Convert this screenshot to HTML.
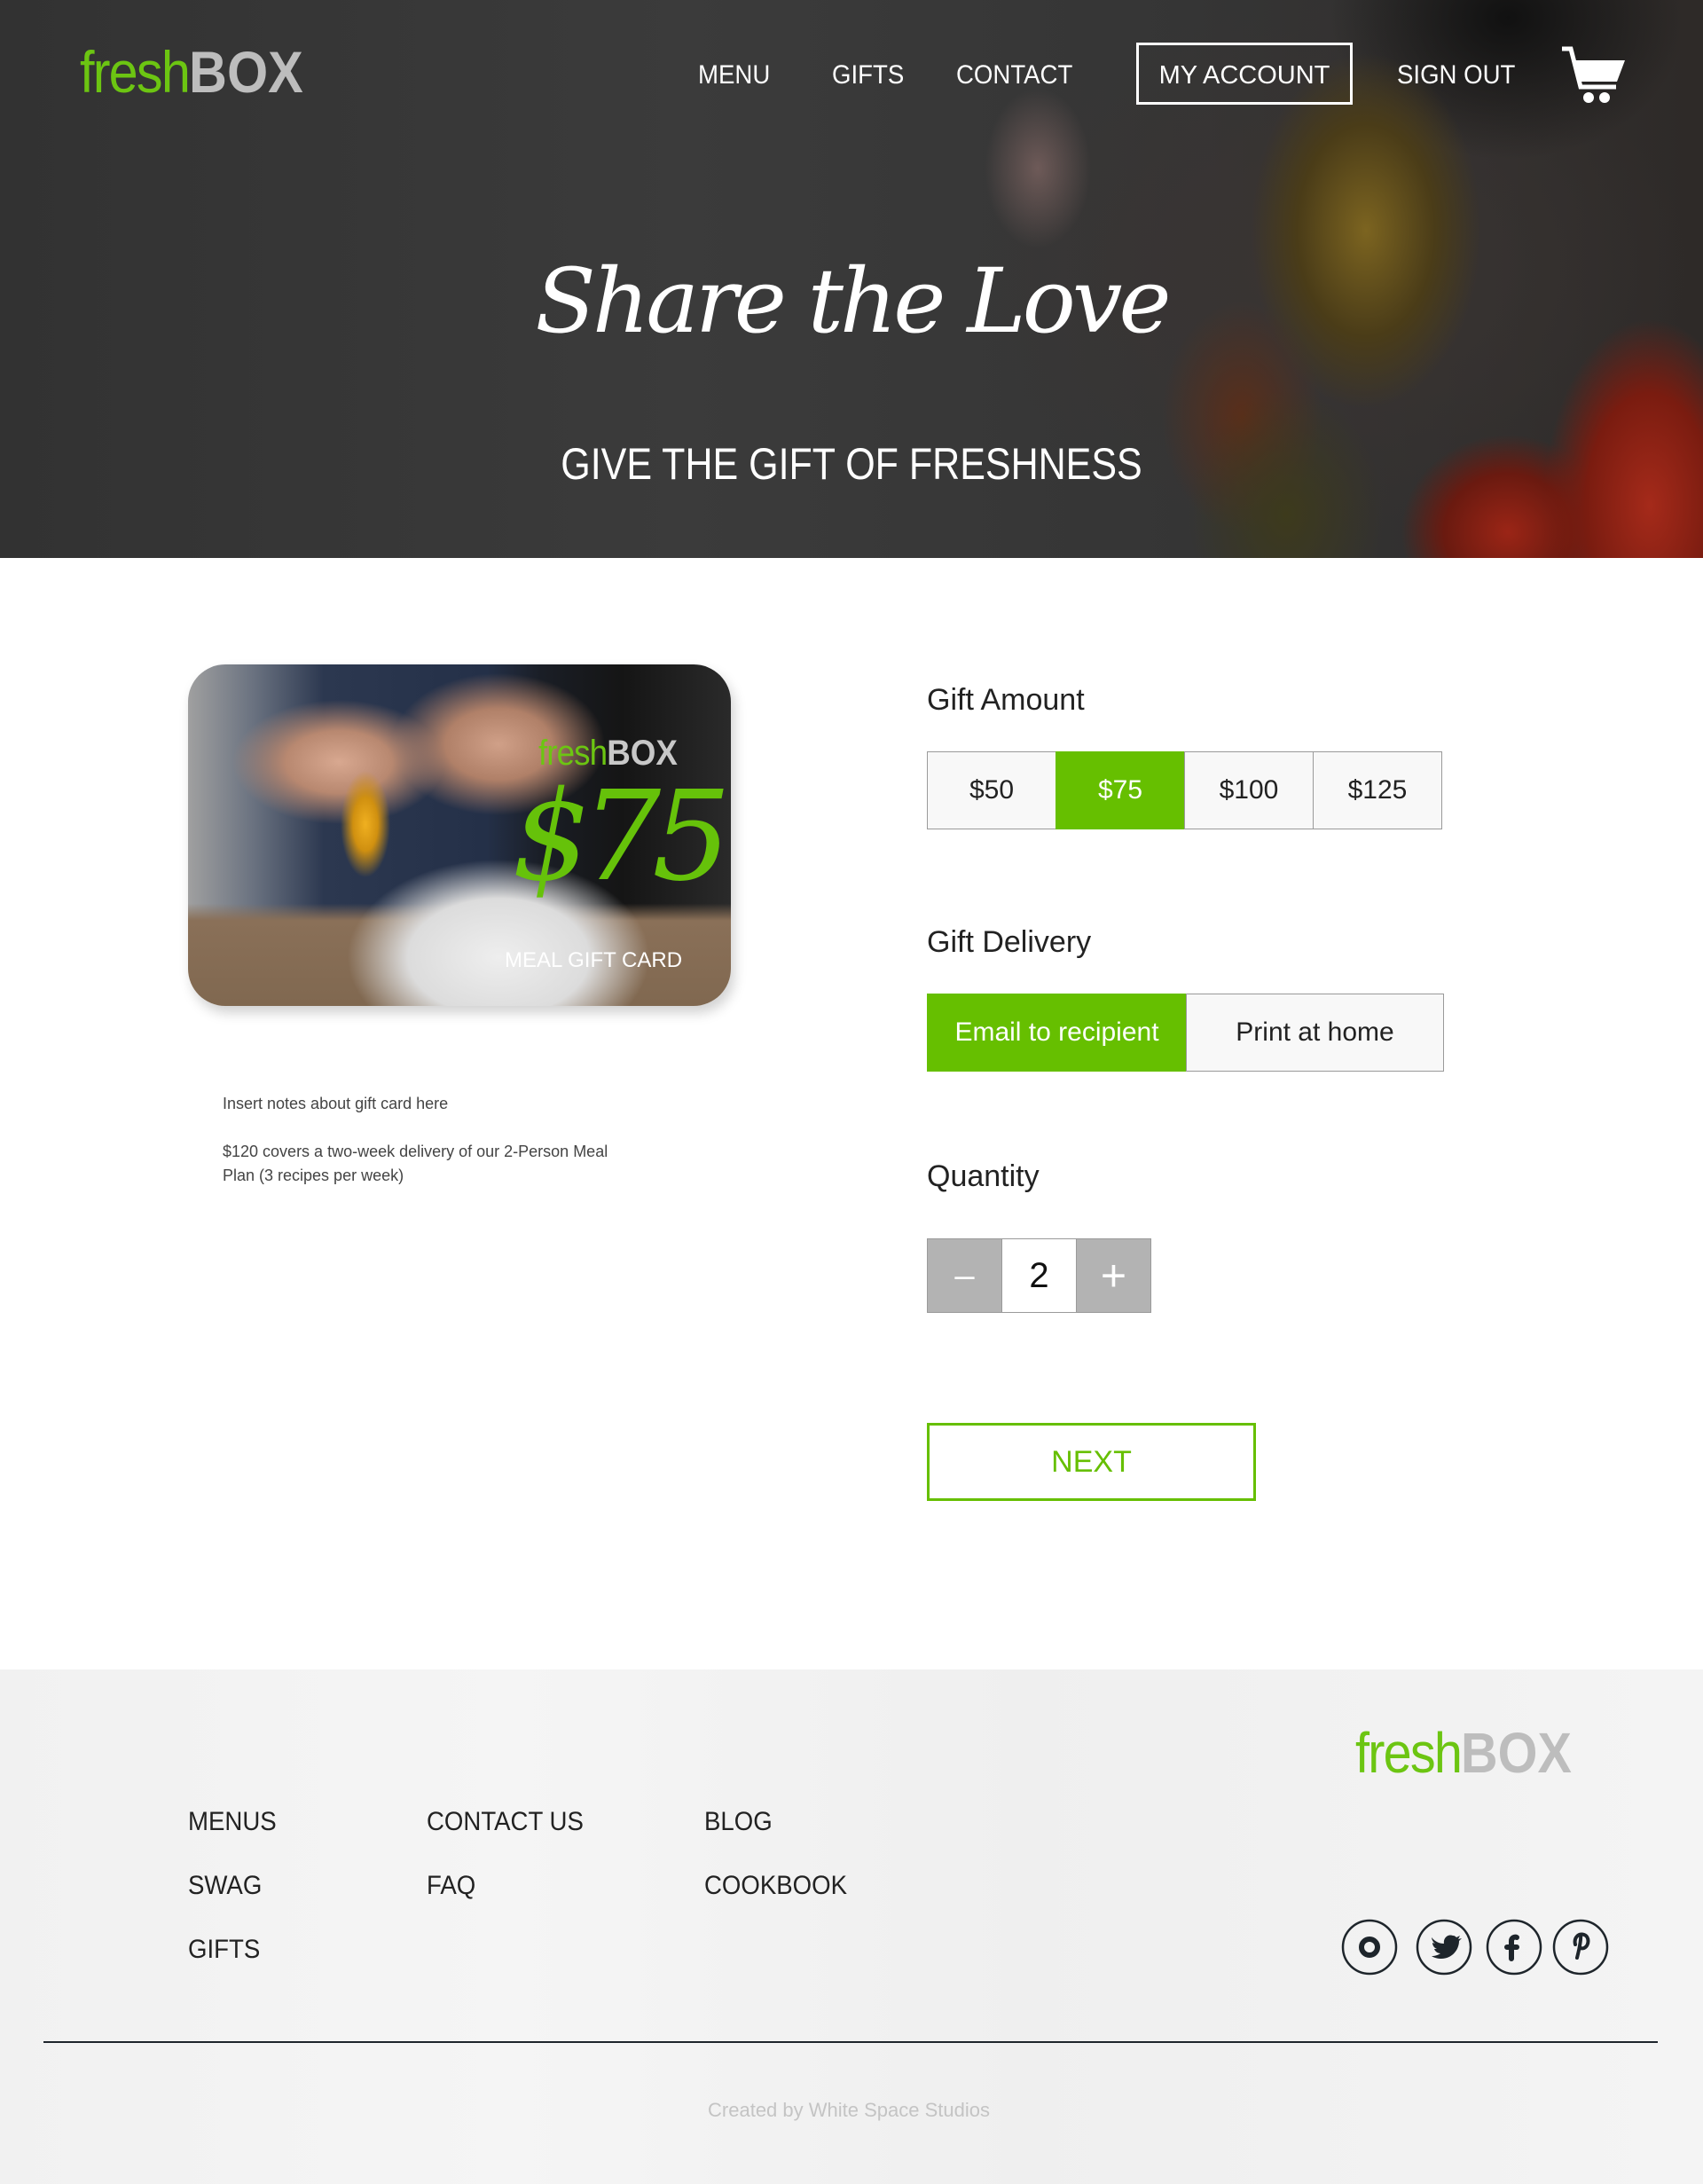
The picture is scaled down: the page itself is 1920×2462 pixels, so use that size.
<!DOCTYPE html>
<html><head><meta charset="utf-8">
<style>
*{margin:0;padding:0;box-sizing:border-box}
body{width:1920px;height:2462px;background:#fff;font-family:"Liberation Sans",sans-serif;position:relative;overflow:hidden}
.abs{position:absolute}
#hero{left:0;top:0;width:1920px;height:629px;overflow:hidden;
background:
radial-gradient(ellipse 120px 210px at 1860px 570px,#a52a1a 0,#7a1c10 60%,transparent 100%),
radial-gradient(ellipse 120px 110px at 1700px 600px,#9b2516 0,#6a1a10 60%,transparent 100%),
radial-gradient(ellipse 110px 140px at 1450px 580px,#3d3a1c 0,transparent 100%),
radial-gradient(ellipse 90px 130px at 1400px 470px,#5a2e1a 0,transparent 100%),
radial-gradient(ellipse 130px 200px at 1540px 260px,#7c6420 0,#4a3c18 60%,transparent 100%),
radial-gradient(ellipse 60px 90px at 1170px 190px,#6e5a58 0,transparent 100%),
radial-gradient(ellipse 200px 160px at 1700px 20px,#111 0,transparent 100%),
radial-gradient(ellipse 400px 300px at 1500px 300px,#3a3432 0,transparent 100%),
linear-gradient(90deg,#323232,#3b3b3b 40%,#353535 70%,#2e2a28)}
.nav{color:#fff;font-size:30px;top:68px;transform:scaleX(.92);transform-origin:left}
.footer{left:0;top:1882px;width:1920px;height:580px;background:linear-gradient(90deg,#f1f1f1,#f5f5f5 30%,#efefef 60%,#f4f4f4);}
.fl{font-size:30px;color:#222;transform:scaleX(.92);transform-origin:left}
.btn{position:absolute;border:1.5px solid #9a9a9a;background:#f8f8f8;color:#222;font-size:30px;display:flex;align-items:center;justify-content:center}
.on{background:#66bf00;color:#fff}
.lbl{font-size:34px;color:#222;left:1045px}
.logo{line-height:1;white-space:nowrap;transform-origin:left top}
</style></head><body>
<div id="hero" class="abs">
  <div class="abs logo" style="left:90px;top:48px;font-size:66px;transform:scaleX(.9)">
    <span style="color:#6cc512;letter-spacing:-2px">fresh</span><span style="color:#bdbdbd;font-weight:bold">BOX</span>
  </div>
  <div class="abs nav" style="left:787px">MENU</div>
  <div class="abs nav" style="left:938px">GIFTS</div>
  <div class="abs nav" style="left:1078px">CONTACT</div>
  <div class="abs" style="left:1281px;top:48px;width:244px;height:70px;border:3px solid #fff;color:#fff;font-size:29px;display:flex;align-items:center;justify-content:center;padding-top:4px">MY ACCOUNT</div>
  <div class="abs nav" style="left:1575px">SIGN OUT</div>
  <svg class="abs" style="left:0;top:0" width="1920" height="629">
    <polyline points="1761,55 1771,55 1782,98 1822,98" fill="none" stroke="#fff" stroke-width="5"/>
    <polygon points="1774,68 1832,68 1823,92 1780,92" fill="#fff"/>
    <circle cx="1791" cy="110" r="6" fill="#fff"/><circle cx="1809" cy="110" r="6" fill="#fff"/>
  </svg>
  <div class="abs" style="left:460px;top:280px;width:1000px;text-align:center;white-space:nowrap;color:#fff;font-family:'DejaVu Serif',serif;font-style:italic;font-weight:200;font-size:100px;letter-spacing:-4px;line-height:1.2">Share the Love</div>
  <div class="abs" style="left:460px;top:494px;width:1000px;text-align:center;white-space:nowrap;color:#fff;font-size:50px;transform:scaleX(.86)">GIVE THE GIFT OF FRESHNESS</div>
</div>

<div class="abs" style="left:212px;top:749px;width:612px;height:385px;border-radius:42px;overflow:hidden;box-shadow:4px 8px 14px rgba(0,0,0,.18);
background:
radial-gradient(ellipse 170px 110px at 350px 330px,#eeeeee 0,#dcdcdc 60%,transparent 100%),
radial-gradient(ellipse 28px 60px at 200px 180px,#f0b020 0,#d09010 50%,transparent 100%),
radial-gradient(ellipse 120px 70px at 170px 110px,#d8a890 0,#b88870 50%,transparent 100%),
radial-gradient(ellipse 120px 80px at 350px 90px,#d0a088 0,#b08068 50%,transparent 100%),
linear-gradient(180deg,transparent 70%,#8a7058 75%,#806850 100%),
linear-gradient(90deg,#a0a0a0 0,#6a7280 12%,#2c3850 25%,#243048 55%,#1a1e26 65%,#151515 80%,#2a2a2a 100%)">
  <div class="abs logo" style="left:395px;top:80px;font-size:40px;transform:scaleX(.92)"><span style="color:#6cc512;letter-spacing:-1px">fresh</span><span style="color:#c8c8c8;font-weight:bold">BOX</span></div>
  <div class="abs" style="left:365px;top:125px;font-size:140px;color:#66c20a;font-family:'DejaVu Serif',serif;font-style:italic;font-weight:200;letter-spacing:-10px;line-height:1">$75</div>
  <div class="abs" style="left:357px;top:320px;font-size:24px;color:#fff">MEAL GIFT CARD</div>
</div>
<div class="abs" style="left:251px;top:1231px;font-size:18px;color:#444;line-height:27px">Insert notes about gift card here<br><br style="line-height:18px">$120 covers a two-week delivery of our 2-Person Meal<br>Plan (3 recipes per week)</div>

<div class="abs lbl" style="top:770px">Gift Amount</div>
<div class="btn" style="left:1045px;top:847px;width:146px;height:88px">$50</div>
<div class="btn on" style="left:1190px;top:847px;width:146px;height:88px;border-color:#66bf00">$75</div>
<div class="btn" style="left:1335px;top:847px;width:146px;height:88px">$100</div>
<div class="btn" style="left:1480px;top:847px;width:146px;height:88px">$125</div>

<div class="abs lbl" style="top:1043px">Gift Delivery</div>
<div class="btn on" style="left:1045px;top:1120px;width:293px;height:88px;border-color:#66bf00">Email to recipient</div>
<div class="btn" style="left:1337px;top:1120px;width:291px;height:88px">Print at home</div>

<div class="abs lbl" style="top:1307px">Quantity</div>
<div class="btn" style="left:1045px;top:1396px;width:85px;height:84px;background:#b3b3b3;color:#fff;font-size:40px">–</div>
<div class="btn" style="left:1129px;top:1396px;width:85px;height:84px;background:#fff;color:#111;font-size:40px">2</div>
<div class="btn" style="left:1213px;top:1396px;width:85px;height:84px;background:#b3b3b3;color:#fff;font-size:50px">+</div>

<div class="abs" style="left:1045px;top:1604px;width:371px;height:88px;border:3px solid #66bf00;color:#66bf00;font-size:34px;display:flex;align-items:center;justify-content:center">NEXT</div>

<div class="abs footer">
  <div class="abs logo" style="left:1528px;top:62px;font-size:64px;transform:scaleX(.9)"><span style="color:#6cc512;letter-spacing:-2px">fresh</span><span style="color:#bdbdbd;font-weight:bold">BOX</span></div>
  <div class="abs fl" style="left:212px;top:155px">MENUS</div>
  <div class="abs fl" style="left:212px;top:227px">SWAG</div>
  <div class="abs fl" style="left:212px;top:299px">GIFTS</div>
  <div class="abs fl" style="left:481px;top:155px">CONTACT US</div>
  <div class="abs fl" style="left:481px;top:227px">FAQ</div>
  <div class="abs fl" style="left:794px;top:155px">BLOG</div>
  <div class="abs fl" style="left:794px;top:227px">COOKBOOK</div>
  <svg class="abs" style="left:0;top:0" width="1920" height="580">
    <g fill="none" stroke="#1e252b" stroke-width="2.5">
      <circle cx="1544" cy="313" r="30"/><circle cx="1628" cy="313" r="30"/><circle cx="1707" cy="313" r="30"/><circle cx="1782" cy="313" r="30"/>
      <circle cx="1544" cy="313" r="9" stroke-width="6"/>
    </g>
    <path fill="#1e252b" d="M1614 302c4 5 9 7 14 7-1-7 5-11 10-9 2 0 3 1 4 2l4-2-2 4 4-1-3 3c0 10-8 20-20 20-4 0-8-1-11-3 4 0 7-1 10-3-3 0-6-2-7-5h3c-3-1-5-4-5-7l3 1c-3-2-4-6-4-7z"/>
    <path fill="none" stroke="#1e252b" stroke-width="6" stroke-linecap="round" d="M1710 302c-2-1-6 0-6 4v20M1699 313h11"/>
    <path fill="none" stroke="#1e252b" stroke-width="4" stroke-linecap="round" d="M1778 325c2-8 5-20 4-26M1776 310c-2-8 4-13 10-11 6 2 6 12 0 15-3 1-5 0-5-2"/>
    <line x1="49" y1="420" x2="1869" y2="420" stroke="#1e252b" stroke-width="2"/>
  </svg>
  <div class="abs" style="left:0;top:484px;width:1914px;text-align:center;font-size:22px;color:#c4c4c4">Created by White Space Studios</div>
</div>
</body></html>
